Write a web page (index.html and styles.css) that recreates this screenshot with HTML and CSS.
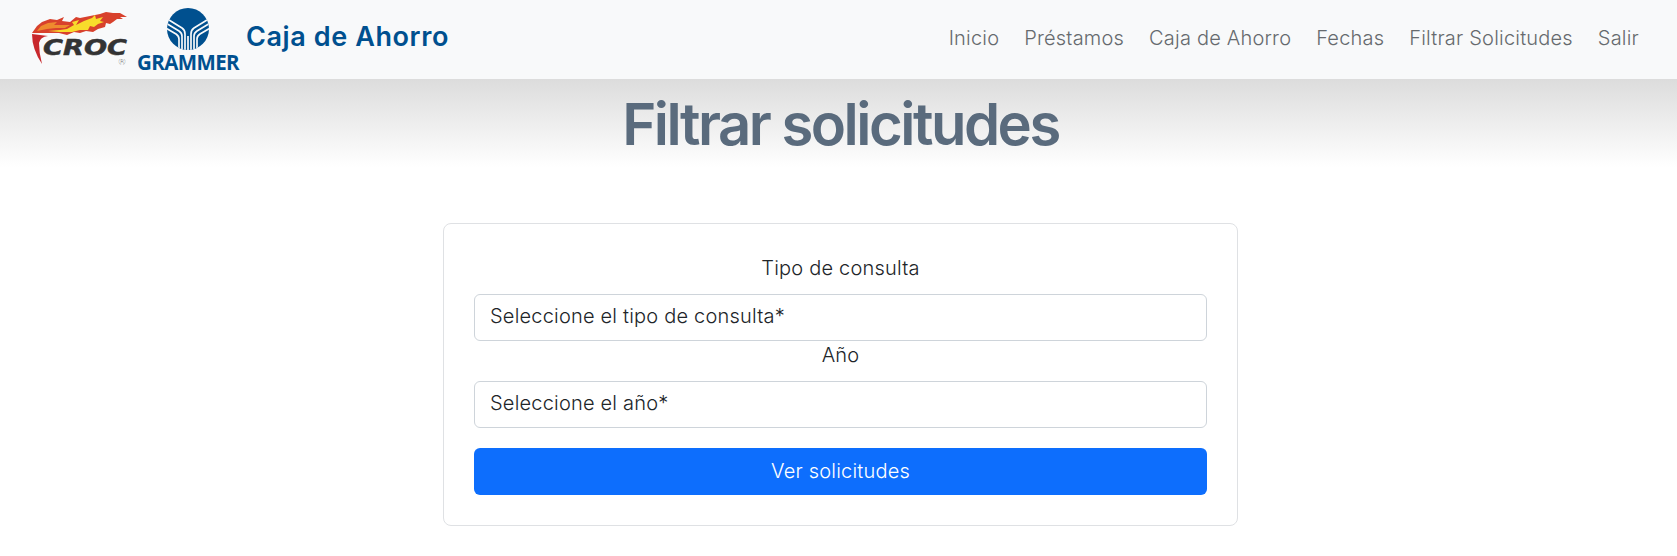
FILE: index.html
```html
<!DOCTYPE html>
<html lang="es">
<head>
<meta charset="utf-8">
<title>Filtrar solicitudes</title>
<link rel="stylesheet" href="styles.css">
</head>
<body>
<nav class="navbar">
  <a class="brand" href="#">
    <svg class="logo-croc" viewBox="0 0 100 56" width="100" height="56" aria-hidden="true">
      <path d="M0 22L5 15L10 11L18 8L25 9L32 6L30 10L38 11L44 6L48 7L58 5L68 3L74 1L81 2L88 2L95 6L88 6L91 8L85 8L81 11L78 13L74 12L73 16L66 18L61 21L54 20L48 22L42 21L35 24L27 22L18 22Z" fill="#d8412c"/>
      <path d="M5 20L9 15L16 12L25 11L22 14L30 14L38 14L33 17L24 17L15 18Z" fill="#ee8a2e"/>
      <path d="M16 20L28 19L35 18L42 14L40 11L47 9L44 14L52 10L60 7L63 4L64 8L71 6L68 10L72 11L66 13L62 16L58 15L56 19L48 19L40 21L28 21Z" fill="#f8dc2b"/>
      <path d="M0 23L16 25Q8 26 7 32Q7 42 10 53Q0 38 0 23Z" fill="#c8282c"/>
      <text class="croc-text" x="11" y="44" textLength="84" lengthAdjust="spacingAndGlyphs">CROC</text>
      <text class="reg-mark" x="90" y="54" text-anchor="middle">®</text>
    </svg>
    <svg class="logo-grammer" viewBox="-6 -3 112 70" width="112" height="70" aria-hidden="true">
      <defs><clipPath id="disc"><circle cx="50" cy="21" r="21"/></clipPath></defs>
      <g clip-path="url(#disc)">
        <rect x="28" y="0" width="44" height="42" fill="#00508f"/>
        <g fill="none" stroke="#f8f9fa" stroke-width="1.700">
          <path d="M26 9L44 20Q47 22 47 26V44"/>
          <path d="M26 14L41 23Q44 25 44 28V44"/>
          <path d="M26 19L38 26Q41 28 41 31V44"/>
          <path d="M74 9L56 20Q53 22 53 26V44"/>
          <path d="M74 14L59 23Q56 25 56 28V44"/>
          <path d="M74 19L62 26Q59 28 59 31V44"/>
          <path d="M50 28V44"/>
        </g>
      </g>
      <text class="grammer-text" x="50" y="62" text-anchor="middle">GRAMMER</text>
    </svg>
    <span class="brand-name">Caja de Ahorro</span>
  </a>
  <ul class="links">
    <li><a href="#">Inicio</a></li>
    <li><a href="#">Préstamos</a></li>
    <li><a href="#">Caja de Ahorro</a></li>
    <li><a href="#">Fechas</a></li>
    <li><a href="#">Filtrar Solicitudes</a></li>
    <li><a href="#">Salir</a></li>
  </ul>
</nav>
<main class="page">
  <h1 class="title">Filtrar solicitudes</h1>
  <form class="card">
    <label class="field-label" for="tipo">Tipo de consulta</label>
    <div class="control" id="tipo">Seleccione el tipo de consulta*</div>
    <label class="field-label second" for="anio">Año</label>
    <div class="control" id="anio">Seleccione el año*</div>
    <button class="submit" type="button">Ver solicitudes</button>
  </form>
</main>
</body>
</html>
```
FILE: styles.css
```css
* { box-sizing: border-box; }
html, body { margin: 0; height: 100%; }
body {
  background: #fff;
  color: #212529;
  font-family: "Inter", "Liberation Sans", sans-serif;
  font-size: 20px;
  font-weight: 350;
  letter-spacing: .2px;
  overflow: hidden;
}
.navbar {
  height: 79px;
  background: #f8f9fa;
  display: flex;
  align-items: center;
  justify-content: space-between;
  padding: 0 38px 2px 32px;
}
.brand {
  display: flex;
  align-items: center;
  text-decoration: none;
}
.logo-croc { margin-top: 1px; }
.logo-grammer { margin-top: 2px; }
.croc-text {
  font-family: "DejaVu Sans", sans-serif;
  font-weight: 700;
  font-style: italic;
  font-size: 21px;
  letter-spacing: 0;
  fill: #333;
  stroke: #333;
  stroke-width: .5;
}
.reg-mark {
  font-family: "DejaVu Sans", sans-serif;
  font-size: 9px;
  letter-spacing: 0;
  fill: #777;
}
.grammer-text {
  font-family: "Open Sans", sans-serif;
  font-weight: 700;
  font-size: 20.500px;
  letter-spacing: -.6px;
  fill: #00508f;
}
.brand-name {
  margin: 0 0 4px 2px;
  color: #00508f;
  font-size: 27px;
  font-weight: 600;
  letter-spacing: .6px;
}
.links {
  list-style: none;
  margin: 0 0 2px;
  padding: 0;
  display: flex;
  gap: 25px;
}
.links a {
  color: #666a6e;
  text-decoration: none;
  font-weight: 300;
  letter-spacing: .2px;
}
.page {
  background: linear-gradient(#dcdcdc 0, #fff 88px) no-repeat;
  padding: 12px 0 0 4px;
}
.title {
  margin: 0;
  text-align: center;
  color: #5a6b7d;
  font-size: 58px;
  line-height: 67px;
  font-weight: 600;
  letter-spacing: -2.5px;
}
.card {
  width: 795px;
  margin: 65px auto 0;
  padding: 30px;
  border: 1px solid #dfe1e4;
  border-radius: 8px;
  display: flex;
  flex-direction: column;
}
.field-label {
  text-align: center;
  line-height: 27px;
  padding-top: 1px;
  margin-bottom: 12px;
}
.control {
  height: 47px;
  padding: 0 15px;
  border: 1px solid #ced4da;
  border-radius: 6px;
  line-height: 43px;
}
.submit {
  margin-top: 20px;
  height: 47px;
  padding: 0 0 2px;
  border: 0;
  border-radius: 6px;
  background: #0d6efd;
  color: #fff;
  font: inherit;
  letter-spacing: inherit;
}
```
